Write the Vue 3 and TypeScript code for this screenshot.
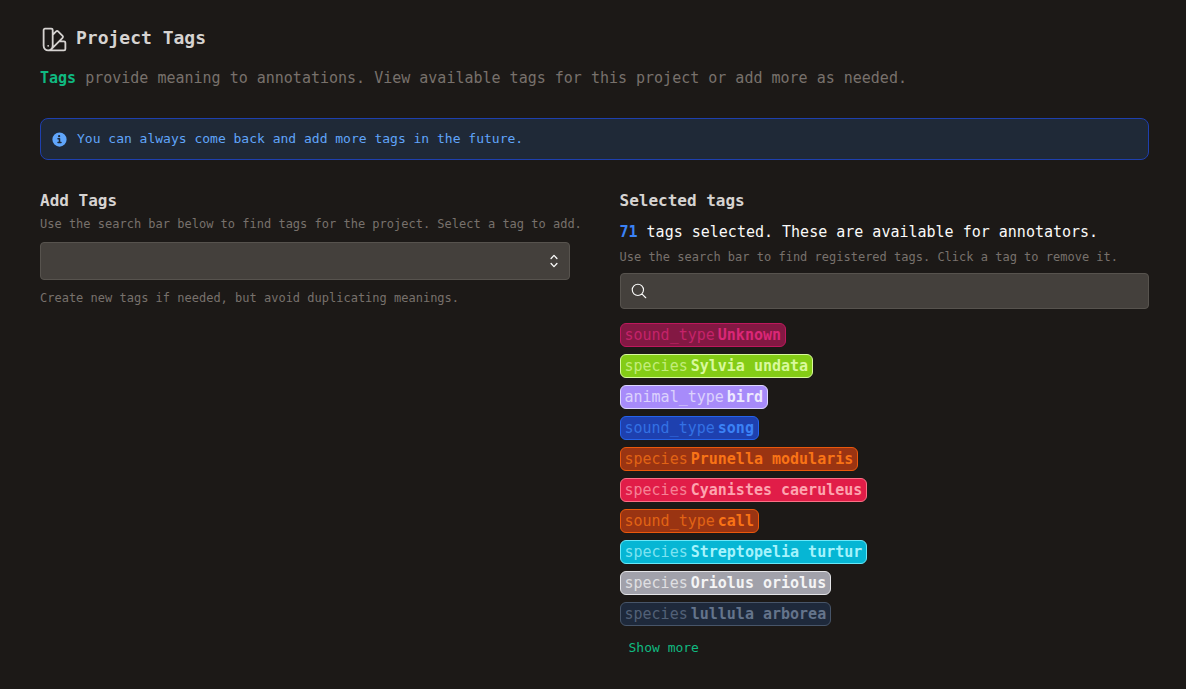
<script setup lang="ts">
import { ref } from 'vue'

interface Tag {
  key: string
  value: string
  tone: string
}

const tagCount = ref(71)
const newTag = ref('')
const query = ref('')

const tags = ref<Tag[]>([
  { key: 'sound_type', value: 'Unknown', tone: 'pink' },
  { key: 'species', value: 'Sylvia undata', tone: 'lime' },
  { key: 'animal_type', value: 'bird', tone: 'violet' },
  { key: 'sound_type', value: 'song', tone: 'blue' },
  { key: 'species', value: 'Prunella modularis', tone: 'orange' },
  { key: 'species', value: 'Cyanistes caeruleus', tone: 'rose' },
  { key: 'sound_type', value: 'call', tone: 'orange' },
  { key: 'species', value: 'Streptopelia turtur', tone: 'cyan' },
  { key: 'species', value: 'Oriolus oriolus', tone: 'zinc' },
  { key: 'species', value: 'lullula arborea', tone: 'slate' },
])

function removeTag(index: number) {
  tags.value.splice(index, 1)
  tagCount.value -= 1
}
</script>

<template>
  <main class="page">
    <header>
      <h1 class="title">
        <svg class="title-icon" viewBox="0 0 24 24" fill="none" stroke="currentColor" stroke-width="1.5" stroke-linecap="round" stroke-linejoin="round" aria-hidden="true">
          <path d="M4.098 19.902a3.75 3.75 0 0 0 5.304 0l6.401-6.402M6.75 21A3.75 3.75 0 0 1 3 17.25V4.125C3 3.504 3.504 3 4.125 3h5.25c.621 0 1.125.504 1.125 1.125v4.072M6.75 21a3.75 3.75 0 0 0 3.75-3.75V8.197M6.75 21h13.125c.621 0 1.125-.504 1.125-1.125v-5.25c0-.621-.504-1.125-1.125-1.125h-4.072M10.5 8.197l2.88-2.88c.438-.439 1.15-.439 1.59 0l3.712 3.713c.44.439.44 1.152 0 1.59l-2.879 2.88M6.75 17.25h.008v.008H6.75v-.008Z" />
        </svg>
        Project Tags
      </h1>
      <p class="lead"><strong>Tags</strong> provide meaning to annotations. View available tags for this project or add more as needed.</p>
    </header>

    <div class="notice" role="note">
      <svg class="notice-icon" viewBox="0 0 20 20" fill="currentColor" aria-hidden="true">
        <path d="M10 .5a9.5 9.5 0 1 0 9.5 9.5A9.51 9.51 0 0 0 10 .5ZM9.5 4a1.5 1.5 0 1 1 0 3 1.5 1.5 0 0 1 0-3ZM12 15H8a1 1 0 0 1 0-2h1v-3H8a1 1 0 0 1 0-2h2a1 1 0 0 1 1 1v4h1a1 1 0 0 1 0 2Z" />
      </svg>
      <span>You can always come back and add more tags in the future.</span>
    </div>

    <div class="columns">
      <section class="column">
        <h2>Add Tags</h2>
        <label class="hint add-hint" for="add-tag">Use the search bar below to find tags for the project. Select a tag to add.</label>
        <div class="field add-field">
          <input id="add-tag" v-model="newTag" type="text" role="combobox" aria-expanded="false" autocomplete="off" />
          <button class="toggle" type="button" aria-label="Show tags">
            <svg viewBox="0 0 20 20" fill="currentColor" aria-hidden="true">
              <path d="M10 3a.75.75 0 01.55.24l3.25 3.5a.75.75 0 11-1.1 1.02L10 4.852 7.3 7.76a.75.75 0 01-1.1-1.02l3.25-3.5A.75.75 0 0110 3zm-3.76 9.2a.75.75 0 011.06.04l2.7 2.908 2.7-2.908a.75.75 0 111.1 1.02l-3.25 3.5a.75.75 0 01-1.1 0l-3.25-3.5a.75.75 0 01.04-1.06z" />
            </svg>
          </button>
        </div>
        <p class="hint">Create new tags if needed, but avoid duplicating meanings.</p>
      </section>

      <section class="column">
        <h2>Selected tags</h2>
        <p class="summary"><strong>{{ tagCount }}</strong> tags selected. These are available for annotators.</p>
        <label class="hint" for="find-tag">Use the search bar to find registered tags. Click a tag to remove it.</label>
        <div class="field search-field">
          <svg class="search-icon" viewBox="0 0 24 24" fill="none" stroke="currentColor" stroke-width="1.5" stroke-linecap="round" stroke-linejoin="round" aria-hidden="true">
            <path d="m21 21-5.197-5.197m0 0A7.5 7.5 0 1 0 5.196 5.196a7.5 7.5 0 0 0 10.607 10.607Z" />
          </svg>
          <input id="find-tag" v-model="query" type="text" autocomplete="off" />
        </div>
        <ul class="tags">
          <li v-for="(tag, index) in tags" :key="tag.key + tag.value">
            <button type="button" class="tag" :class="tag.tone" @click="removeTag(index)">
              <span class="tag-key">{{ tag.key }}</span>
              <span class="tag-value">{{ tag.value }}</span>
            </button>
          </li>
        </ul>
        <button class="more" type="button">Show more</button>
      </section>
    </div>
  </main>
</template>

<style>
body {
  background: #1c1917;
}
</style>

<style scoped>
.page {
  box-sizing: border-box;
  padding: 25px 37px 32px 40px;
  color: #fafaf9;
  font-family: "DejaVu Sans Mono", "Liberation Mono", monospace;
  font-size: 15px;
}

h1,
h2,
p,
ul {
  margin: 0;
  padding: 0;
}

input,
button {
  margin: 0;
  padding: 0;
  border: 0;
  background: none;
  color: inherit;
  font: inherit;
}

button {
  cursor: pointer;
}

svg {
  display: block;
  flex: none;
}

.title {
  display: flex;
  align-items: flex-start;
  gap: 7px;
  color: #d6d3d1;
  font-size: 18px;
  line-height: 25px;
}

.title-icon {
  width: 29px;
  height: 29px;
}

.lead {
  margin-top: 13px;
  color: #78716c;
  line-height: 22px;
}

.lead strong {
  color: #10b981;
}

.notice {
  display: flex;
  align-items: center;
  gap: 10px;
  margin-top: 29px;
  padding: 10px 11px;
  border: 1px solid #1e40af;
  border-radius: 8px;
  background: #1f2937;
  color: #60a5fa;
  font-size: 13px;
  line-height: 20px;
}

.notice-icon {
  width: 15px;
  height: 15px;
}

.columns {
  display: grid;
  grid-template-columns: repeat(2, minmax(0, 1fr));
  gap: 50px;
  margin-top: 29px;
}

.column {
  display: flex;
  flex-direction: column;
  align-items: stretch;
}

h2 {
  color: #d6d3d1;
  font-size: 16px;
  line-height: 24px;
}

.hint {
  color: #78716c;
  font-size: 12px;
  line-height: 18px;
  white-space: nowrap;
}

.add-hint {
  margin-top: 2px;
}

.field {
  display: flex;
  align-items: center;
  box-sizing: border-box;
  border: 1px solid #57534e;
  border-radius: 4px;
  background: #44403c;
}

.field:focus-within {
  border-color: #10b981;
}

.field input {
  flex: 1;
  min-width: 0;
  align-self: stretch;
  padding: 0 10px;
  outline: none;
}

.add-field {
  height: 38px;
  margin: 9px 0;
}

.toggle {
  padding: 0 6px;
}

.toggle svg {
  width: 18px;
  height: 18px;
}

.summary {
  margin: 7px 0 4px;
  line-height: 24px;
}

.summary strong {
  color: #3b82f6;
}

.search-field {
  height: 36px;
  margin-top: 7px;
  padding-left: 9px;
}

.search-icon {
  width: 18px;
  height: 18px;
}

.tags {
  display: flex;
  flex-direction: column;
  gap: 7px;
  margin-top: 14px;
  list-style: none;
}

.tags li {
  display: flex;
}

.tag {
  display: flex;
  gap: 3px;
  padding: 0 4px;
  border: 1px solid;
  border-radius: 6px;
  line-height: 22px;
  white-space: nowrap;
}

.tag-key {
  opacity: 0.75;
}

.tag-value {
  font-weight: 700;
}

.pink { background: #831843; border-color: #be185d; color: #db2777; }
.lime { background: #84cc16; border-color: #d9f99d; color: #d9f99d; }
.violet { background: #a78bfa; border-color: #ddd6fe; color: #ede9fe; }
.blue { background: #1e40af; border-color: #2563eb; color: #3b82f6; }
.orange { background: #9a3412; border-color: #ea580c; color: #f97316; }
.rose { background: #e11d48; border-color: #fb7185; color: #fda4af; }
.cyan { background: #06b6d4; border-color: #67e8f9; color: #a5f3fc; }
.zinc { background: #a1a1aa; border-color: #e4e4e7; color: #f4f4f5; }
.slate { background: #1e293b; border-color: #475569; color: #64748b; }

.more {
  align-self: flex-start;
  margin-top: 13px;
  padding: 0 9px;
  color: #10b981;
  font-size: 13px;
  line-height: 18px;
}
</style>
